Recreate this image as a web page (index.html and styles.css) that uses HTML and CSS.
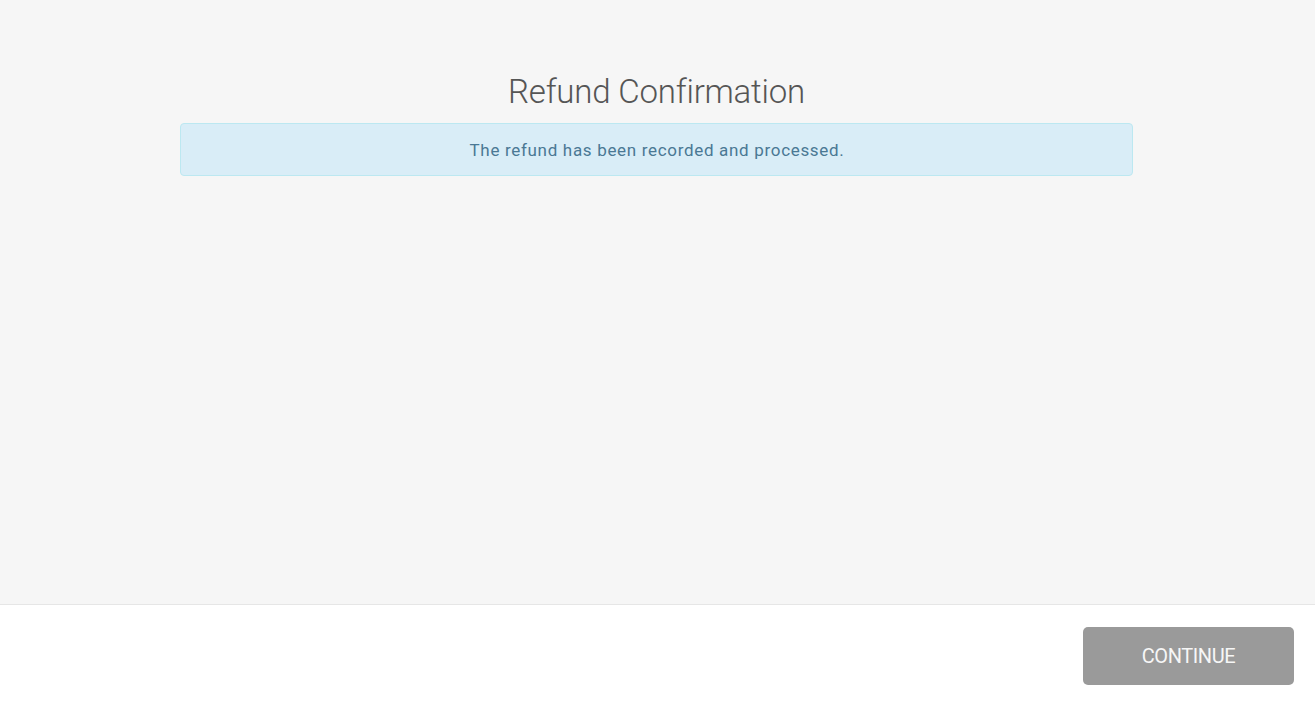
FILE: index.html
```html
<!DOCTYPE html>
<html>
<head>
<meta charset="utf-8">
<link rel="stylesheet" href="styles.css">
</head>
<body>
<main class="main">
  <div class="container">
    <h1 class="title">Refund Confirmation</h1>
    <div class="alert">The refund has been recorded and processed.</div>
  </div>
</main>
<footer class="footer">
  <button class="btn">CONTINUE</button>
</footer>
</body>
</html>
```
FILE: styles.css
```css
html, body { margin: 0; padding: 0; }
body {
  font-family: "Roboto", "Liberation Sans", sans-serif;
  background: #fff;
  width: 1315px;
  height: 704px;
  overflow: hidden;
}
.main {
  height: 605px;
  background: #f6f6f6;
  border-bottom: 1px solid #e6e6e6;
  box-sizing: border-box;
  padding-top: 72px;
}
.container {
  width: 953px;
  margin: 0 auto;
  position: relative;
  left: -1px;
}
.title {
  margin: 0 0 11px 0;
  text-align: center;
  font-weight: 300;
  font-size: 33px;
  line-height: 40px;
  color: #555;
  letter-spacing: -0.2px;
}
.alert {
  height: 53px;
  box-sizing: border-box;
  background: #d9edf7;
  border: 1px solid #bce8f1;
  border-radius: 4px;
  color: #4a7894;
  font-size: 17px;
  text-align: center;
  line-height: 52px;
  letter-spacing: 0.68px;
  padding-left: 1px;
}
.footer {
  height: 99px;
  display: flex;
  justify-content: flex-end;
  align-items: flex-start;
  padding: 22px 21px 0 0;
  box-sizing: border-box;
}
.btn {
  width: 211px;
  height: 58px;
  background: #9a9a9a;
  border: none;
  border-radius: 5px;
  color: #f6f6f6;
  font-family: "Roboto", "Liberation Sans", sans-serif;
  font-size: 20px;
  letter-spacing: -0.4px;
  padding: 0;
}
```
